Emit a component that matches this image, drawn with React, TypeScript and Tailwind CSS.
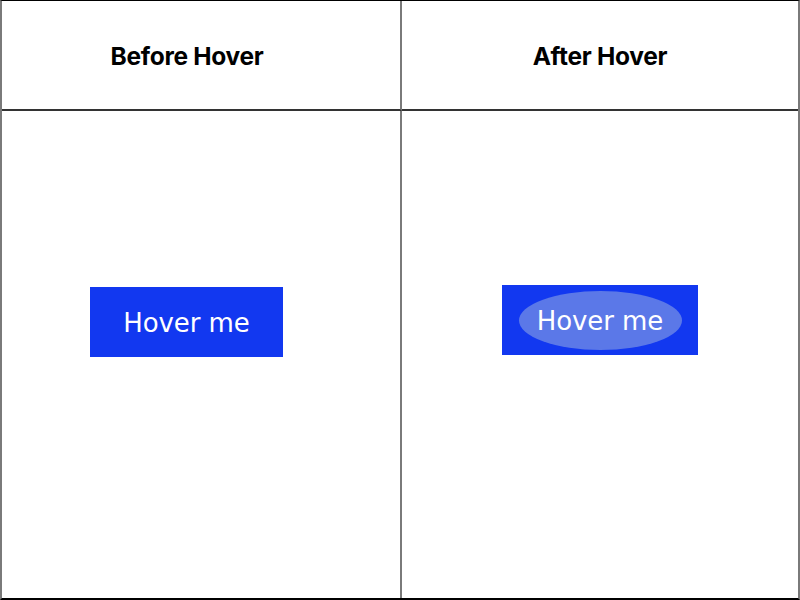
export default function App() {
  return (
    <div className="w-[800px] h-[600px] bg-white grid grid-cols-[400px_1fr] grid-rows-[110px_1fr] border-l-2 border-r-2 border-l-[#7a7a7a] border-r-[#7a7a7a] border-t border-t-black border-b-2 border-b-black">
      <div className="flex items-center justify-center border-r-2 border-[#7a7a7a] border-b-2 border-b-[#333] pr-[28px] pt-[2px]">
        <h2 className="text-[24.5px] font-bold text-black tracking-[-0.3px]" style={{ fontFamily: "Inter, 'Noto Sans', sans-serif" }}>
          Before Hover
        </h2>
      </div>
      <div className="flex items-center justify-center border-b-2 border-b-[#333] pt-[2px]">
        <h2 className="text-[24.5px] font-bold text-black tracking-[-0.3px]" style={{ fontFamily: "Inter, 'Noto Sans', sans-serif" }}>
          After Hover
        </h2>
      </div>

      <div className="flex justify-start border-r-2 border-[#7a7a7a] pt-[176px] pl-[88px]">
        <button className="w-[193px] h-[70px] bg-[#1238f0] flex items-center justify-center text-white text-[26px] font-['DejaVu_Sans',sans-serif] tracking-[-0.1px] pt-[3px]">
          Hover me
        </button>
      </div>
      <div className="flex justify-start pt-[174px] pl-[100px]">
        <button className="w-[196px] h-[70px] bg-[#1238f0] flex items-center justify-center">
          <span className="w-[163px] h-[59px] rounded-[50%] bg-[#5b78e8] flex items-center justify-center text-white text-[26px] font-['DejaVu_Sans',sans-serif] tracking-[-0.1px] pt-[3px]">
            Hover me
          </span>
        </button>
      </div>
    </div>
  );
}
